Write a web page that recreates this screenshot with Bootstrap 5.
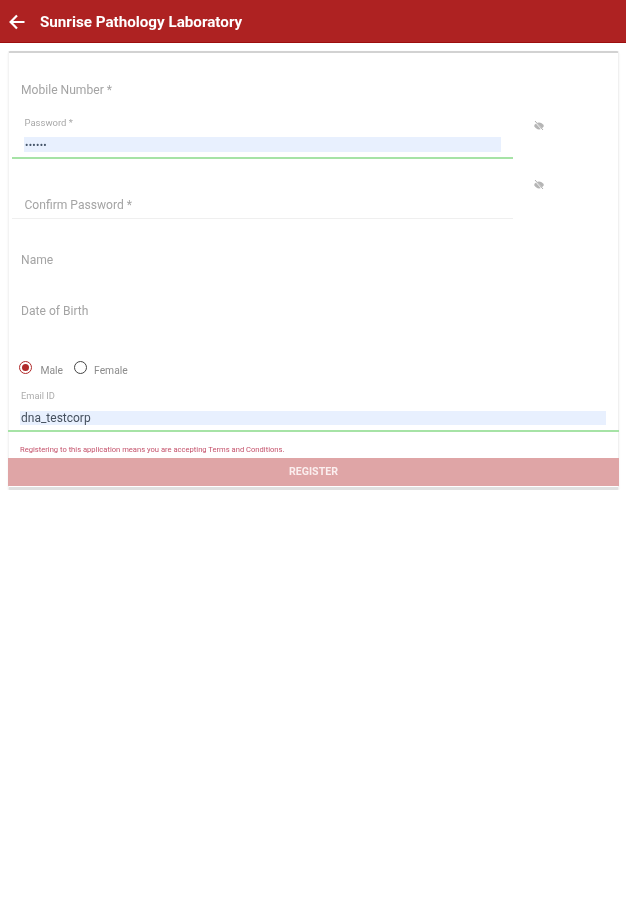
<!DOCTYPE html>
<html lang="en">
<head>
<meta charset="utf-8">
<title>Sunrise Pathology Laboratory</title>
<link href="https://cdn.jsdelivr.net/npm/bootstrap@5.3.0/dist/css/bootstrap.min.css" rel="stylesheet">
<style>
body{background:#fff;font-family:Roboto,"Liberation Sans",sans-serif;color:#aaa;}
.app-bar{height:43px;background:#ae2222;border-bottom:1px solid #9c0e0e;padding:0 0 0 9px;justify-content:flex-start;flex-wrap:nowrap;gap:15px;}
.app-bar svg{margin-top:2px;}
.app-title{font-size:15.2px;font-weight:700;color:#fff;line-height:1;margin-top:3px;}
.form-sheet{margin:8px 7px 0 8px;height:439px;border:0;border-top:2px solid #d2d2d2;border-bottom:3px solid #e0e0e0;border-left:1px solid #f3f3f3;border-right:1px solid #f0f0f0;border-radius:2px;box-shadow:0 1px 2px rgba(0,0,0,.08);}
.soft{filter:blur(.6px);}
.pw-row{width:501px;margin-left:3px;}
.big-label{font-size:12.1px;line-height:15px;color:#a4a4a4;}
.row-mobile{height:57px;padding:30px 0 0 12px;}
.row-pass{height:48px;}
.tiny-label{font-size:9.5px;line-height:11px;color:#a8a8a8;padding:7px 0 0 12.5px;height:27px;}
.pw-fill{height:15px;margin-left:12px;width:477px;background:#e8f0fe;color:#46566a;font-size:10px;line-height:17px;letter-spacing:.3px;padding-left:1px;}
.line-ok{height:2px;background:#a6e3a6;}
.pw-row .line-ok{margin-top:5px;}
.row-confirm{height:61px;}
.row-confirm .big-label{padding:40px 0 0 12.5px;height:60px;}
.line-off{height:1px;background:#efefef;}
.eye-slot{width:20px;margin-left:20px;}
.eye-one{margin-top:10px;}
.eye-two{margin-top:47px;}
.row-name{height:52px;padding:34px 0 0 12px;}
.row-dob{height:51px;padding:33px 0 0 12px;}
.row-radio{height:63px;padding:39px 0 0 10px;gap:0;}
.dot-on,.dot-off{width:13px;height:13px;border-radius:50%;flex:none;background:#fff;}
.dot-on{border:1.5px solid #b02a2a;display:flex;align-items:center;justify-content:center;}
.dot-on i{display:block;width:7px;height:7px;border-radius:50%;background:#b02a2a;}
.dot-off{border:1.5px solid #444;}
.radio-text{font-size:10.3px;line-height:11px;color:#8c8c8c;}
.text-male{margin:4px 11px 0 8.5px;}
.text-female{margin:4px 0 0 7px;}
.mail-label{font-size:9.3px;line-height:10px;color:#acacac;padding:6px 0 0 12px;height:26px;}
.mail-fill{height:14px;margin:0 12px 0 11px;background:#e8f0fe;color:#45505e;font-size:12px;line-height:14px;padding-left:1px;}
.row-mail .line-ok{margin-top:5px;margin-left:-1px;margin-right:-1px;}
.terms{height:26px;padding:13px 0 0 11px;font-size:7.6px;line-height:10px;color:#c4516a;}
.reg-btn{height:28px;width:611px;margin-left:-1px;padding:0;border:0;border-radius:0;background:#dfa5a6;color:#fbeeee;font-size:10.6px;font-weight:700;line-height:26px;}
</style>
</head>
<body>
<nav class="navbar app-bar soft">
  <svg width="16" height="16" viewBox="0 0 16 16" fill="none" stroke="#fff" stroke-width="2.2" aria-hidden="true"><path d="M15.5 8H2M8 1.500 1.600 8 8 14.500"/></svg>
  <span class="app-title">Sunrise Pathology Laboratory</span>
</nav>
<div class="card form-sheet soft">
  <div class="row-mobile big-label">Mobile Number *</div>
  <div class="d-flex">
    <div class="pw-row">
      <div class="row-pass">
        <div class="tiny-label">Password *</div>
        <div class="pw-fill">••••••</div>
        <div class="line-ok"></div>
      </div>
      <div class="row-confirm">
        <div class="big-label">Confirm Password *</div>
        <div class="line-off"></div>
      </div>
    </div>
    <div class="eye-slot d-flex flex-column">
      <svg class="eye-one" width="12" height="12" viewBox="0 0 12 12" fill="none" aria-hidden="true"><path d="M1 6c1.600-2.400 3-3.400 5-3.400S9.400 3.600 11 6c-1.600 2.400-3 3.400-5 3.400S2.600 8.400 1 6Z" fill="#b5b5b5"/><path d="M2 1.500 10 10.500" stroke="#fff" stroke-width="1.400"/><path d="M2 1 10 10" stroke="#999" stroke-width=".8"/></svg>
      <svg class="eye-two" width="12" height="12" viewBox="0 0 12 12" fill="none" aria-hidden="true"><path d="M1 6c1.600-2.400 3-3.400 5-3.400S9.400 3.600 11 6c-1.600 2.400-3 3.400-5 3.400S2.600 8.400 1 6Z" fill="#b5b5b5"/><path d="M2 1.500 10 10.500" stroke="#fff" stroke-width="1.400"/><path d="M2 1 10 10" stroke="#999" stroke-width=".8"/></svg>
    </div>
  </div>
  <div class="row-name big-label">Name</div>
  <div class="row-dob big-label">Date of Birth</div>
  <div class="row-radio d-flex">
    <span class="dot-on"><i></i></span><span class="radio-text text-male">Male</span>
    <span class="dot-off"></span><span class="radio-text text-female">Female</span>
  </div>
  <div class="row-mail">
    <div class="mail-label">Email ID</div>
    <div class="mail-fill">dna_testcorp</div>
    <div class="line-ok"></div>
  </div>
  <div class="terms">Registering to this application means you are accepting Terms and Conditions.</div>
  <button type="button" class="btn reg-btn">REGISTER</button>
</div>
<script src="https://cdn.jsdelivr.net/npm/bootstrap@5.3.0/dist/js/bootstrap.bundle.min.js"></script>
</body>
</html>
